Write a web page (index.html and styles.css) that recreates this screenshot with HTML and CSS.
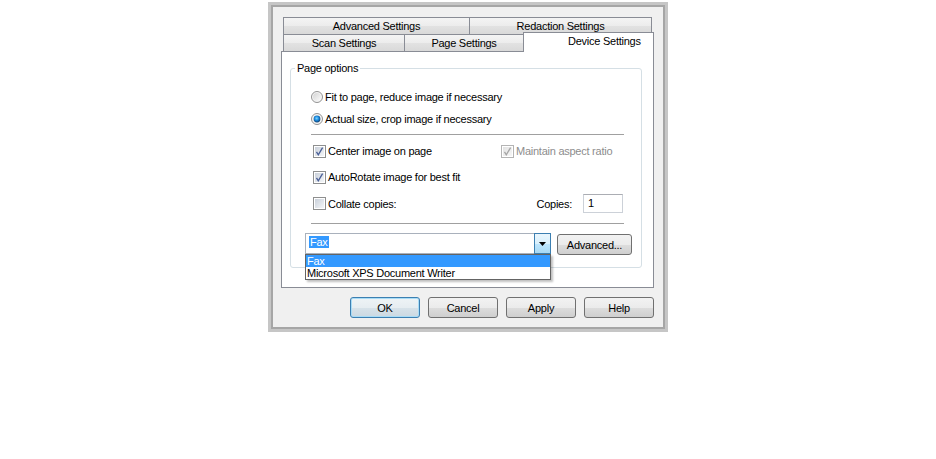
FILE: index.html
```html
<!DOCTYPE html>
<html>
<head>
    <title>Device Settings</title>
    <link rel="stylesheet" href="styles.css">
</head>
<body>
    <div class="dialog">
        <div class="tabs">
            <div class="tab-row">
                <div class="tab tab-advanced">Advanced Settings</div>
                <div class="tab tab-redaction">Redaction Settings</div>
            </div>
            <div class="tab-row">
                <div class="tab tab-scan">Scan Settings</div>
                <div class="tab tab-page">Page Settings</div>
                <div class="tab tab-device active">Device Settings</div>
            </div>
            <div class="panel">
                <div class="group">
                    <div class="group-title">Page options</div>
                    <div class="choices">
                        <div class="radio-row">
                            <svg class="radio" width="12" height="12" viewBox="0 0 12 12">
                                <defs>
                                    <linearGradient id="ring1" x1="0" y1="0" x2="1" y2="1">
                                        <stop offset="0" stop-color="#d4d4d4"/>
                                        <stop offset="1" stop-color="#fbfbfb"/>
                                    </linearGradient>
                                </defs>
                                <circle cx="6" cy="6" r="5.5" fill="#f6f6f6" stroke="#929292"/>
                                <circle cx="6" cy="6" r="4" fill="url(#ring1)"/>
                            </svg>
                            <span>Fit to page, reduce image if necessary</span>
                        </div>
                        <div class="radio-row">
                            <svg class="radio" width="12" height="12" viewBox="0 0 12 12">
                                <defs>
                                    <radialGradient id="dot1" cx="0.45" cy="0.4" r="0.6">
                                        <stop offset="0" stop-color="#7fd6ff"/>
                                        <stop offset="0.5" stop-color="#1b8be0"/>
                                        <stop offset="1" stop-color="#12406f"/>
                                    </radialGradient>
                                </defs>
                                <circle cx="6" cy="6" r="5.5" fill="#f6f6f6" stroke="#929292"/>
                                <circle cx="6" cy="6" r="3.4" fill="url(#dot1)"/>
                            </svg>
                            <span>Actual size, crop image if necessary</span>
                        </div>
                        <div class="rule"></div>
                        <div class="check-row first">
                            <div class="pair wide">
                                <span class="box">
                                    <svg width="9" height="9" viewBox="0 0 9 9"><path class="tick" d="M1.5 4.8 L3.3 7.8 L7.6 0.6"/></svg>
                                </span>
                                <span>Center image on page</span>
                            </div>
                            <div class="pair disabled">
                                <span class="box">
                                    <svg width="9" height="9" viewBox="0 0 9 9"><path class="tick" d="M1.5 4.8 L3.3 7.8 L7.6 0.6"/></svg>
                                </span>
                                <span>Maintain aspect ratio</span>
                            </div>
                        </div>
                        <div class="check-row">
                            <div class="pair">
                                <span class="box">
                                    <svg width="9" height="9" viewBox="0 0 9 9"><path class="tick" d="M1.5 4.8 L3.3 7.8 L7.6 0.6"/></svg>
                                </span>
                                <span>AutoRotate image for best fit</span>
                            </div>
                        </div>
                        <div class="check-row collate">
                            <div class="pair">
                                <span class="box"></span>
                                <span>Collate copies:</span>
                            </div>
                            <div class="copies">
                                <span>Copies:</span>
                                <div class="field">1</div>
                            </div>
                        </div>
                        <div class="rule second"></div>
                    </div>
                    <div class="combo-row">
                        <div class="combo">
                            <div class="combo-value"><span class="selected">Fax</span></div>
                            <div class="drop">
                                <svg width="7" height="4" viewBox="0 0 7 4"><path d="M0 0 H7 L3.5 4 Z" fill="#000"/></svg>
                            </div>
                            <ul class="menu">
                                <li class="menu-item hl">Fax</li>
                                <li class="menu-item">Microsoft XPS Document Writer</li>
                            </ul>
                        </div>
                        <button class="btn advanced">Advanced...</button>
                    </div>
                </div>
            </div>
        </div>
        <div class="buttons">
            <button class="btn default">OK</button>
            <button class="btn">Cancel</button>
            <button class="btn">Apply</button>
            <button class="btn">Help</button>
        </div>
    </div>
</body>
</html>
```
FILE: styles.css
```css
body {
    margin: 0;
    background-color: #fff;
    font-family: "Liberation Sans", Arial, sans-serif;
    font-size: 11px;
    letter-spacing: -0.25px;
    color: #000;
}

.dialog {
    box-sizing: border-box;
    width: 400px;
    height: 330px;
    margin: 2px 0 0 268px;
    padding: 12px 11px 0 10px;
    background-color: #f0f0f0;
    border: 3px solid #c6c6c6;
    box-shadow: inset 0 0 0 2px #a6a6a6;
}

/* tabs */
.tabs {
    width: 373px;
}
.tab-row {
    display: flex;
    height: 17px;
    margin-left: 2px;
}
.tab {
    box-sizing: border-box;
    height: 17px;
    border: 1px solid #898c95;
    border-bottom: none;
    background: linear-gradient(#f4f4f4, #ececec 50%, #e2e2e2 51%, #d9d9d9);
    text-align: center;
    line-height: 16px;
    white-space: nowrap;
}
.tab + .tab {
    margin-left: -1px;
}
.tab-advanced { width: 187px; }
.tab-redaction { width: 183px; }
.tab-scan { width: 122px; }
.tab-page { width: 120px; }
.tab-device { width: 131px; }

.tab.active {
    position: relative;
    z-index: 1;
    height: 20px;
    margin-top: -2px;
    padding-left: 44px;
    background: #fff;
    text-align: left;
}

.panel {
    box-sizing: border-box;
    height: 237px;
    padding: 16px 0 0 8px;
    border: 1px solid #898c95;
    background-color: #fff;
}

/* group box */
.group {
    box-sizing: border-box;
    width: 352px;
    padding: 0 8px 12px 14px;
    border: 1px solid #d5dfe5;
    border-radius: 3px;
}
.group-title {
    width: max-content;
    margin: -7px 0 0 -10px;
    padding: 0 2px;
    background-color: #fff;
    line-height: 13px;
}
.choices {
    margin-left: 6px;
    padding-top: 11px;
}
.radio-row {
    display: flex;
    align-items: center;
    gap: 2px;
    height: 22px;
}
.rule {
    width: 313px;
    height: 1px;
    margin-top: 4px;
    background-color: #a0a0a0;
}
.rule.second {
    margin-top: 6px;
}
.check-row {
    display: flex;
    align-items: center;
    width: 310px;
    height: 26px;
    margin-left: 2px;
}
.check-row.first {
    margin-top: 3px;
}
.check-row.collate {
    height: 27px;
    justify-content: space-between;
}
.pair {
    display: flex;
    align-items: center;
    gap: 2px;
}
.pair.wide {
    width: 188px;
}
.pair.disabled {
    color: #8d8d8d;
}

.box {
    box-sizing: border-box;
    display: flex;
    width: 13px;
    height: 13px;
    padding: 1px;
    border: 1px solid #8e8f8f;
    background: linear-gradient(135deg, #c9d0da, #f4f6f8) content-box, #fff padding-box;
}
.tick {
    fill: none;
    stroke: #4a5f97;
    stroke-width: 1.3;
}
.disabled .box {
    border-color: #b4b4b4;
    background: linear-gradient(135deg, #e2e2e2, #f6f6f6) content-box, #fff padding-box;
}
.disabled .tick {
    stroke: #a5a5a5;
}

.copies {
    display: flex;
    align-items: center;
    gap: 11px;
}
.field {
    box-sizing: border-box;
    width: 40px;
    height: 19px;
    padding-left: 4px;
    border: 1px solid #ccd1d8;
    border-top-color: #abadb3;
    line-height: 17px;
    background-color: #fff;
}

/* printer combo */
.combo-row {
    display: flex;
    align-items: flex-start;
    gap: 6px;
    height: 22px;
    margin-top: 9px;
}
.combo {
    position: relative;
    box-sizing: border-box;
    display: flex;
    width: 246px;
    height: 21px;
    border: 1px solid #a9b1bc;
    background-color: #fff;
}
.combo-value {
    flex: 1;
    padding: 2px 0 0 3px;
    line-height: 13px;
}
.selected {
    padding: 0 1px;
    background-color: #3399ff;
    color: #fff;
}
.drop {
    box-sizing: border-box;
    display: flex;
    align-items: center;
    justify-content: center;
    width: 17px;
    height: 21px;
    margin: -1px -1px 0 0;
    border: 1px solid #3c7fb1;
    background: linear-gradient(#eaf6fd, #d9f0fc 50%, #bee6fd 51%, #a7d9f5);
}
.menu {
    position: absolute;
    left: -1px;
    top: 20px;
    z-index: 2;
    box-sizing: border-box;
    width: 246px;
    margin: 0;
    padding: 0;
    list-style: none;
    border: 1px solid #646464;
    background-color: #fff;
    box-shadow: 2px 2px 2px rgba(0, 0, 0, 0.25);
}
.menu-item {
    padding-left: 1px;
    line-height: 12px;
    white-space: nowrap;
}
.menu-item.hl {
    background-color: #3399ff;
    color: #fff;
}

/* buttons */
.btn {
    box-sizing: border-box;
    width: 70px;
    height: 21px;
    padding: 0;
    border: 1px solid #707070;
    border-radius: 3px;
    background: linear-gradient(#f2f2f2, #ebebeb 50%, #dddddd 51%, #cfcfcf);
    font-family: inherit;
    font-size: 11px;
    letter-spacing: -0.25px;
    color: #000;
}
.btn.advanced {
    width: 75px;
    margin-top: 1px;
}
.btn.default {
    border-color: #3c7fb1;
    box-shadow: inset 0 0 0 1px #a8dcf6;
    background: linear-gradient(#eef3f6, #e6edf1 50%, #d7e2e9 51%, #ccd9e2);
}
.buttons {
    display: flex;
    justify-content: flex-end;
    gap: 8px;
    margin-top: 9px;
}
```
